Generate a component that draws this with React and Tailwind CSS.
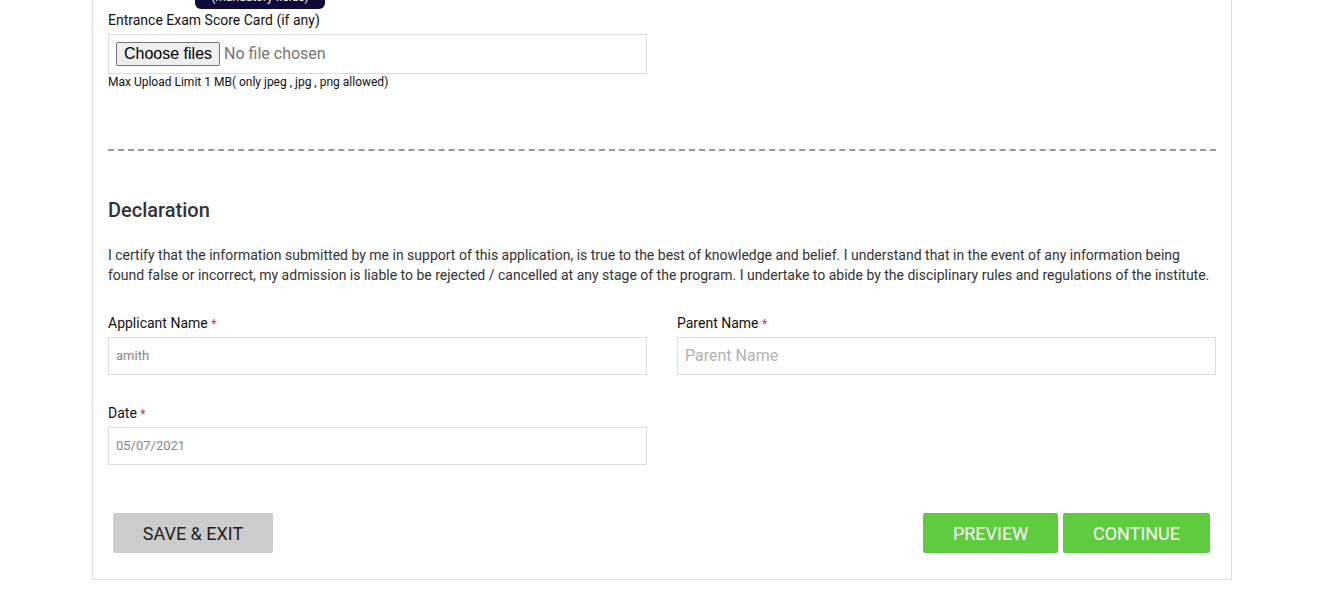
export default function App() {
  return (
    <div className="min-h-screen bg-white font-['Roboto',sans-serif]">
      <div className="mx-[92px] w-[1140px] border-x border-b border-[#ddd] px-[15px] pb-[26px] relative">
        {/* clipped tooltip from the field above */}
        <div className="absolute left-[102px] top-[-17px] w-[130px] h-[26px] rounded-md bg-[#0e0938] text-white text-[12px] leading-[16px] text-center pt-[6px]">
          (mandatory fields)
        </div>

        <div className="pt-[10px]">
          <label className="block text-[14px] leading-[20px] text-[#111]">Entrance Exam Score Card (if any)</label>
          <div className="mt-[4px] w-[539px] h-[40px] border border-[#ddd] flex items-center pl-[7px]">
            <span className="font-['Liberation_Sans',sans-serif] text-[16px] leading-[20px] text-black bg-[#efefef] border border-[#767676] rounded-[2px] px-[7px] py-[1px]">
              Choose files
            </span>
            <span className="ml-[4px] text-[16px] text-[#757575]">No file chosen</span>
          </div>
          <p className="text-[12px] leading-[16px] text-[#111]">Max Upload Limit 1 MB( only jpeg , jpg , png allowed)</p>
        </div>

        <div className="mt-[59px] border-t-2 border-dashed border-[#999]" />

        <h3 className="mt-[47px] text-[20px] leading-[24px] font-medium text-[#333]">Declaration</h3>
        <p className="mt-[23px] text-[14px] leading-[20px] text-[#333]">
          I certify that the information submitted by me in support of this application, is true to the best of knowledge and belief. I understand that in the event of any information being found false or incorrect, my admission is liable to be rejected / cancelled at any stage of the program. I undertake to abide by the disciplinary rules and regulations of the institute.
        </p>

        <div className="mt-[27px] grid grid-cols-2 gap-x-[30px] gap-y-[27px]">
          <div>
            <label className="block text-[14px] leading-[20px] text-[#111] pt-[1px]">
              Applicant Name <span className="text-[#e0245e] text-[12px]">*</span>
            </label>
            <div className="mt-[3px] h-[38px] border border-[#ddd] flex items-center px-[7px] text-[13px] text-[#888]">amith</div>
          </div>
          <div>
            <label className="block text-[14px] leading-[20px] text-[#111] pt-[1px]">
              Parent Name <span className="text-[#e0245e] text-[12px]">*</span>
            </label>
            <div className="mt-[3px] h-[38px] border border-[#ddd] flex items-center px-[7px] text-[16px] text-[#b3b3b3]">Parent Name</div>
          </div>
          <div>
            <label className="block text-[14px] leading-[20px] text-[#111] pt-[1px]">
              Date <span className="text-[#e0245e] text-[12px]">*</span>
            </label>
            <div className="mt-[3px] h-[38px] border border-[#ddd] flex items-center px-[7px] text-[13px] text-[#888]">05/07/2021</div>
          </div>
        </div>

        <div className="mt-[48px] flex items-center justify-between px-[5px]">
          <button className="w-[160px] h-[40px] rounded-[2px] bg-[#cccccc] text-[18px] text-[#222]">SAVE &amp; EXIT</button>
          <div className="flex gap-[5px] mr-[1px]">
            <button className="w-[135px] h-[40px] rounded-[2px] bg-[#5fcb3f] text-[18px] text-white">PREVIEW</button>
            <button className="w-[147px] h-[40px] rounded-[2px] bg-[#5fcb3f] text-[18px] text-white">CONTINUE</button>
          </div>
        </div>
      </div>
    </div>
  );
}
